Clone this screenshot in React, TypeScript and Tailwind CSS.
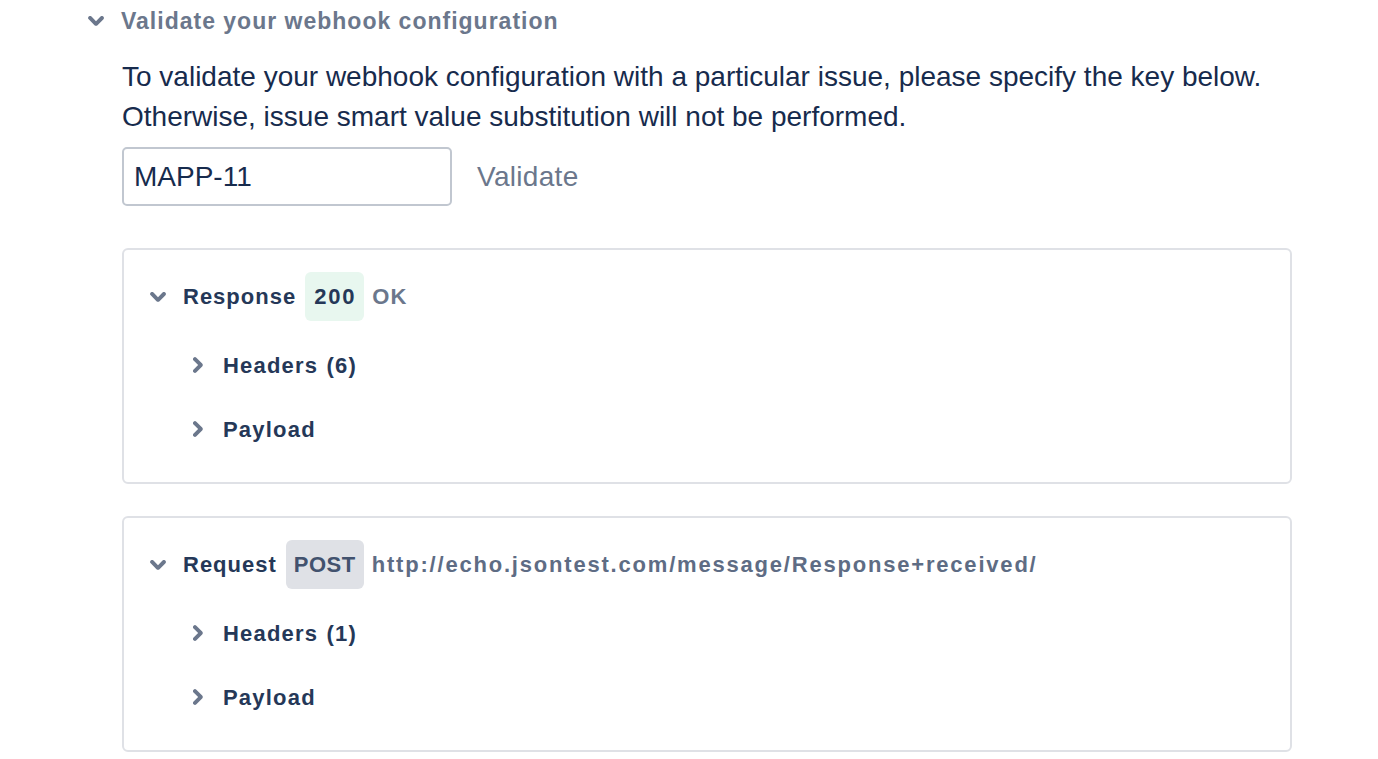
import React from "react";

function ChevronDown() {
  return (
    <svg width="16" height="10" viewBox="8 10 8 5.1" className="shrink-0">
      <path
        fill="#6b778c"
        d="M8.292 10.293a1.009 1.009 0 0 0 0 1.419l2.939 2.965c.218.215.5.322.779.322s.556-.107.769-.322l2.93-2.955a1.01 1.01 0 0 0 0-1.419.987.987 0 0 0-1.406 0l-2.298 2.317-2.307-2.327a.99.99 0 0 0-1.406 0z"
      />
    </svg>
  );
}

function ChevronRight() {
  return (
    <svg width="10" height="16" viewBox="10 8 5.1 8" className="shrink-0">
      <path
        fill="#6b778c"
        d="M10.294 9.698a.988.988 0 0 1 0-1.407 1.01 1.01 0 0 1 1.419.003l2.965 2.94c.215.219.322.5.322.779s-.107.556-.322.769l-2.955 2.93a1.01 1.01 0 0 1-1.419.004.988.988 0 0 1 0-1.407l2.318-2.297-2.328-2.314z"
      />
    </svg>
  );
}

function SubRow({ label }: { label: string }) {
  return (
    <div className="flex items-center h-[64px] pl-[69px]">
      <ChevronRight />
      <span className="ml-[20px] text-[22px] font-bold tracking-[1.2px] [word-spacing:1px] text-[#253858]">
        {label}
      </span>
    </div>
  );
}

function Card({
  title,
  badge,
  badgeClass,
  trailing,
  trailingClass,
  items,
}: {
  title: string;
  badge: string;
  badgeClass: string;
  trailing: string;
  trailingClass: string;
  items: string[];
}) {
  return (
    <div className="border-2 border-[#dfe1e6] rounded-[6px] w-[1170px] h-[236px] pt-[22px]">
      <div className="flex items-center h-[49px] pl-[26px]">
        <ChevronDown />
        <span className="ml-[17px] text-[22px] font-bold tracking-[1px] text-[#253858]">{title}</span>
        <span
          className={`ml-[9px] h-[49px] flex items-center rounded-[6px] text-[22px] font-bold ${badgeClass}`}
        >
          {badge}
        </span>
        <span className={`ml-[8px] text-[22px] font-bold ${trailingClass}`}>{trailing}</span>
      </div>
      <div className="mt-[12px]">
        {items.map((it) => (
          <SubRow key={it} label={it} />
        ))}
      </div>
    </div>
  );
}

export default function App() {
  return (
    <div className="w-[1378px] h-[759px] bg-white overflow-hidden font-['Liberation_Sans',Arial,sans-serif]">
      <div className="pl-[88px]">
        <div className="flex items-center h-[42px]">
          <ChevronDown />
          <span className="ml-[17px] text-[23px] font-bold tracking-[1px] text-[#6b778c]">
            Validate your webhook configuration
          </span>
        </div>
        <div className="pl-[34px]">
          <p className="mt-[15px] text-[28px] leading-[40px] text-[#172b4d]">
            To validate your webhook configuration with a particular issue, please specify the key below.
            <br />
            Otherwise, issue smart value substitution will not be performed.
          </p>
          <div className="flex items-center mt-[10px]">
            <div className="w-[330px] h-[59px] border-2 border-[#c1c7d0] rounded-[5px] flex items-center pl-[10px] text-[28px] text-[#172b4d]">
              MAPP-11
            </div>
            <span className="ml-[25px] text-[28px] tracking-[0.3px] text-[#6b778c]">Validate</span>
          </div>
          <div className="mt-[42px]">
            <Card
              title="Response"
              badge="200"
              badgeClass="bg-[#e8f7ef] text-[#253858] tracking-[1.8px] pl-[9px] pr-[8px]"
              trailing="OK"
              trailingClass="tracking-[1px] text-[#6b778c]"
              items={["Headers (6)", "Payload"]}
            />
          </div>
          <div className="mt-[32px]">
            <Card
              title="Request"
              badge="POST"
              badgeClass="bg-[#dfe1e6] text-[#42526e] tracking-[0.5px] px-[8px]"
              trailing="http://echo.jsontest.com/message/Response+received/"
              trailingClass="tracking-[1.8px] text-[#5e6c84]"
              items={["Headers (1)", "Payload"]}
            />
          </div>
        </div>
      </div>
    </div>
  );
}
